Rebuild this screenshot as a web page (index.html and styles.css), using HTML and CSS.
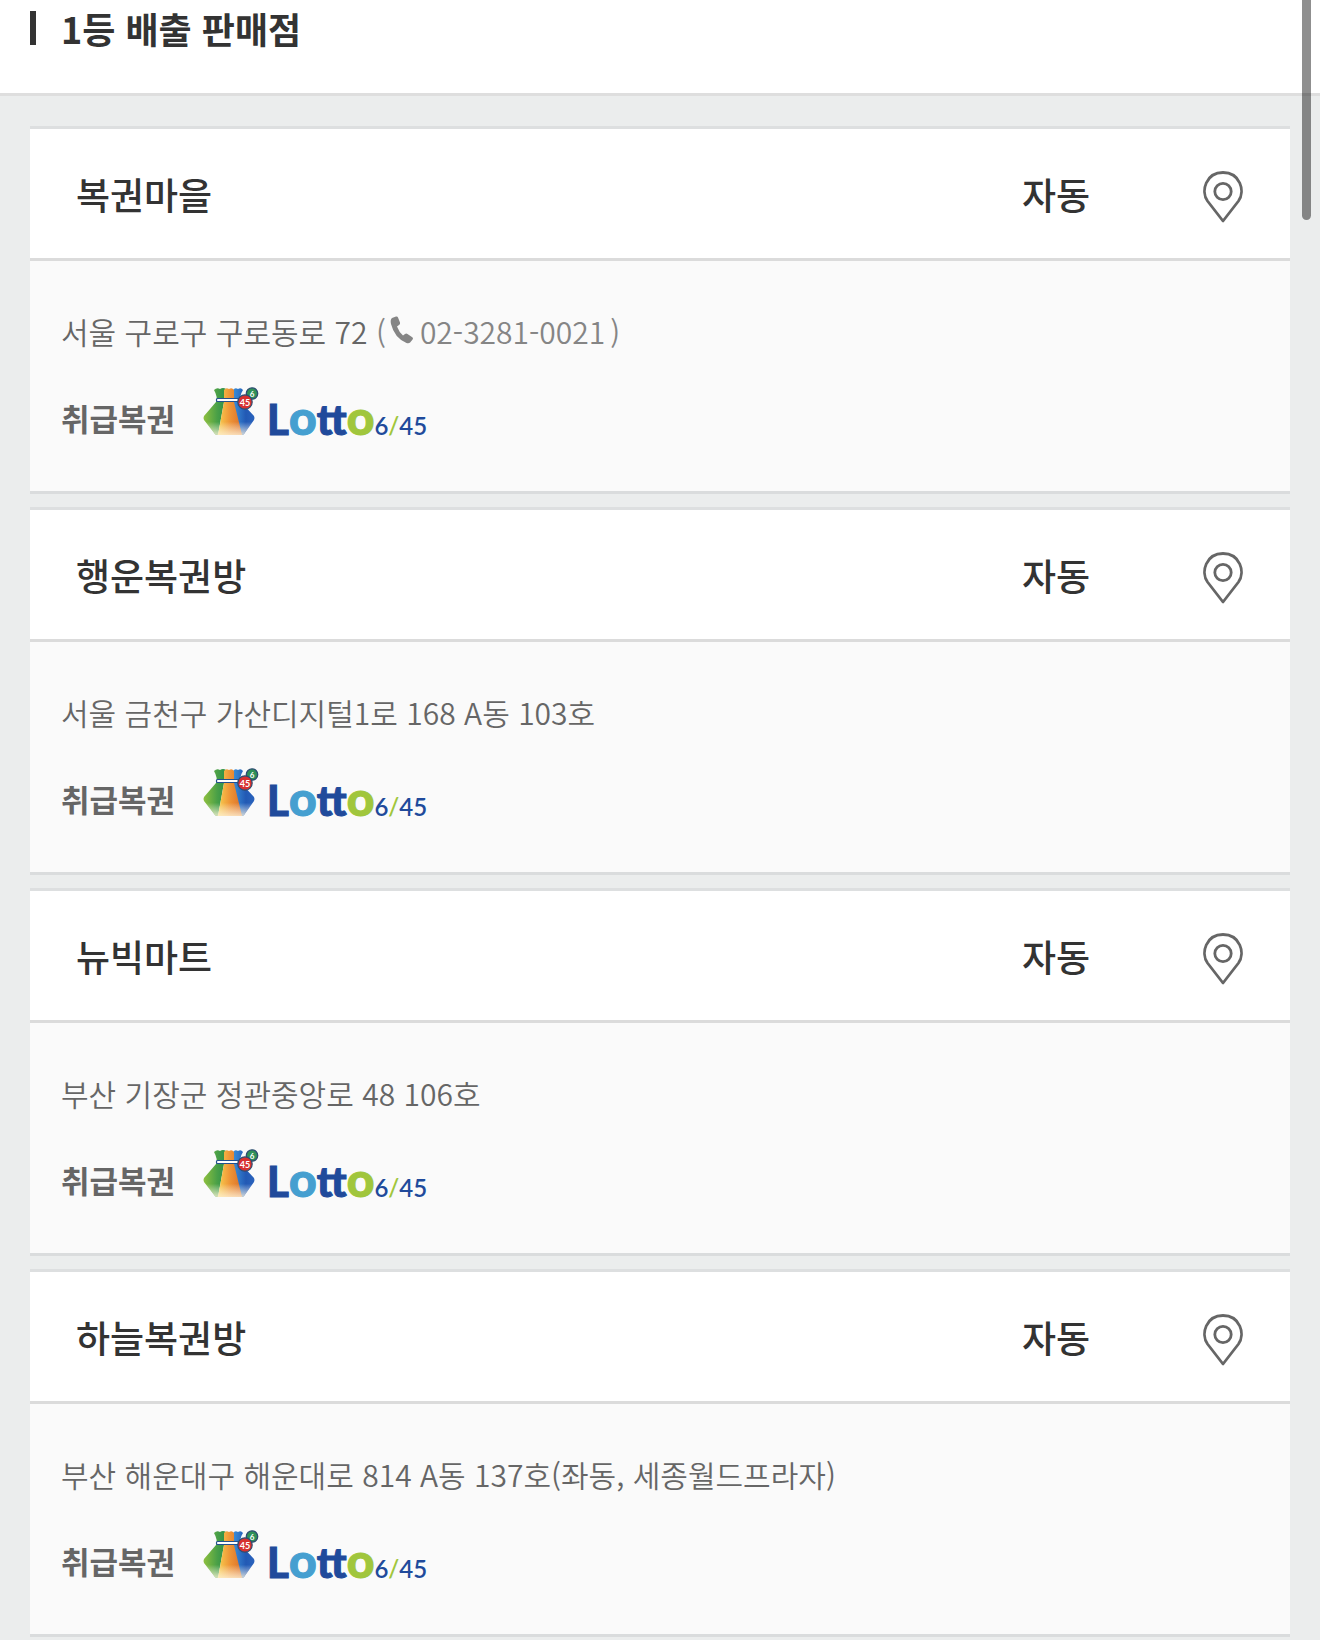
FILE: index.html
```html
<!DOCTYPE html>
<html lang="ko">
<head>
<meta charset="utf-8">
<meta name="viewport" content="width=device-width, initial-scale=1">
<title>1등 배출 판매점</title>
<link rel="stylesheet" href="styles.css">
</head>
<body>
<svg class="sprite" width="0" height="0" aria-hidden="true">
  <defs>
    <linearGradient id="green" x1="0" y1="0" x2="1" y2="0"><stop offset="0" stop-color="#8fc03f"/><stop offset=".6" stop-color="#4aa047"/><stop offset="1" stop-color="#2c8f49"/></linearGradient>
    <linearGradient id="orange" x1="0" y1="0" x2="1" y2="0"><stop offset="0" stop-color="#f8cf50"/><stop offset=".5" stop-color="#ee9436"/><stop offset="1" stop-color="#d9702a"/></linearGradient>
    <linearGradient id="blue" x1="0" y1="0" x2="1" y2="0"><stop offset="0" stop-color="#3b8fd8"/><stop offset=".6" stop-color="#2259b4"/><stop offset="1" stop-color="#2a63bd"/></linearGradient>
    <linearGradient id="shine" x1="0" y1="0" x2="0" y2="1"><stop offset=".6" stop-color="#fff" stop-opacity="0"/><stop offset="1" stop-color="#fff3d8" stop-opacity=".8"/></linearGradient>
    <symbol id="bag" viewBox="0 0 56 48">
      <path fill="url(#green)" d="M11 3q3-3 6-1 3-2 6 0l-2 13-6 33h-1q-1 0-2-1L1 33q-1-2 0-4l12-14q2-5-2-12z"/>
      <path fill="url(#blue)" d="M30 3q2-3 5-1 3-2 5 1-4 6-2 12l13 14q1 2 0 4L41 47q-1 1-2 1h-2l-7-33z"/>
      <path fill="url(#orange)" d="M21 3q2-3 5-1 3-2 5 1v12l8 33H15l6-33z"/>
      <path fill="url(#shine)" d="M1 33q-1-2 0-4l12-14h25l13 14q1 2 0 4L41 47q-1 1-2 1H14q-1 0-2-1z"/>
      <rect x="13.500" y="11.500" width="22" height="3" rx="1" fill="#fff" stroke="#23508e" stroke-width="1.200"/>
      <circle cx="49" cy="6.500" r="5.700" fill="#2f9158" stroke="#2c4d71" stroke-width="1.300"/>
      <circle cx="42" cy="15" r="7.200" fill="#d7302f" stroke="#2c4d71" stroke-width="1.200"/>
      <text class="ball-text" x="42" y="18.500" font-size="9">45</text>
      <text class="ball-text" x="49" y="9.500" font-size="8">6</text>
    </symbol>
    <symbol id="pin" viewBox="0 0 40 52">
      <path d="M20 50 4.500 30C-2.500 20 3 1.500 20 1.500S42.500 20 35.500 30z" fill="none" stroke="#666" stroke-width="2.800" stroke-linejoin="round"/>
      <circle cx="20" cy="20.500" r="8.200" fill="none" stroke="#666" stroke-width="2.800"/>
    </symbol>
    <symbol id="phone" viewBox="0 0 24 28">
      <path fill="#858585" d="M2 2 6 .500q1.500-.5 2 1l2 5q.5 1.500-1 2.500L7 10.500q2 5.500 6 9l2-1.500q1.300-1 2.500 0l4.800 3.200q1.300 1 .3 2.300l-2.500 3q-1.300 1.300-3.600.5Q4.500 22 1 8 0 3.500 2 2z"/>
    </symbol>
  </defs>
</svg>

<header class="page-head"><h1 class="page-title">1등 배출 판매점</h1></header>

<main class="stores">
  <article class="store">
    <div class="store-head">
      <h2 class="store-name">복권마을</h2>
      <span class="store-type">자동</span>
      <button class="map-button" type="button" aria-label="복권마을 위치"><svg class="pin"><use href="#pin"/></svg></button>
    </div>
    <div class="store-body">
      <p class="address">서울 구로구 구로동로 72 <span class="tel">(<a class="tel-link" href="tel:02-3281-0021"><svg class="phone" aria-hidden="true"><use href="#phone"/></svg>02-3281-0021</a>)</span></p>
      <div class="products">
        <strong class="label">취급복권</strong>
        <div class="logo"><svg class="bag"><use href="#bag"/></svg><span class="word">L<span class="round sky">o</span>tt<span class="round lime">o</span></span><span class="nums">6<span class="lime">/</span>45</span></div>
      </div>
    </div>
  </article>

  <article class="store">
    <div class="store-head">
      <h2 class="store-name">행운복권방</h2>
      <span class="store-type">자동</span>
      <button class="map-button" type="button" aria-label="행운복권방 위치"><svg class="pin"><use href="#pin"/></svg></button>
    </div>
    <div class="store-body">
      <p class="address">서울 금천구 가산디지털1로 168 A동 103호</p>
      <div class="products">
        <strong class="label">취급복권</strong>
        <div class="logo"><svg class="bag"><use href="#bag"/></svg><span class="word">L<span class="round sky">o</span>tt<span class="round lime">o</span></span><span class="nums">6<span class="lime">/</span>45</span></div>
      </div>
    </div>
  </article>

  <article class="store">
    <div class="store-head">
      <h2 class="store-name">뉴빅마트</h2>
      <span class="store-type">자동</span>
      <button class="map-button" type="button" aria-label="뉴빅마트 위치"><svg class="pin"><use href="#pin"/></svg></button>
    </div>
    <div class="store-body">
      <p class="address">부산 기장군 정관중앙로 48 106호</p>
      <div class="products">
        <strong class="label">취급복권</strong>
        <div class="logo"><svg class="bag"><use href="#bag"/></svg><span class="word">L<span class="round sky">o</span>tt<span class="round lime">o</span></span><span class="nums">6<span class="lime">/</span>45</span></div>
      </div>
    </div>
  </article>

  <article class="store">
    <div class="store-head">
      <h2 class="store-name">하늘복권방</h2>
      <span class="store-type">자동</span>
      <button class="map-button" type="button" aria-label="하늘복권방 위치"><svg class="pin"><use href="#pin"/></svg></button>
    </div>
    <div class="store-body">
      <p class="address">부산 해운대구 해운대로 814 A동 137호(좌동, 세종월드프라자)</p>
      <div class="products">
        <strong class="label">취급복권</strong>
        <div class="logo"><svg class="bag"><use href="#bag"/></svg><span class="word">L<span class="round sky">o</span>tt<span class="round lime">o</span></span><span class="nums">6<span class="lime">/</span>45</span></div>
      </div>
    </div>
  </article>
</main>
<div class="scroll-thumb" aria-hidden="true"></div>
</body>
</html>
```
FILE: styles.css
```css
* { box-sizing: border-box; }
body {
  margin: 0;
  min-height: 100vh;
  background: #ebeded;
  color: #333;
  font-family: "Noto Sans CJK KR", sans-serif;
}
h1, h2, p { margin: 0; }
.sprite { position: absolute; }

.page-head {
  padding: 6px 30px 43px;
  background: #fff;
  border-bottom: 3px solid #dedede;
}
.page-title {
  display: flex;
  align-items: center;
  gap: 25px;
  font-size: 36px;
  line-height: 44px;
  font-weight: 700;
}
.page-title::before {
  content: "";
  width: 6px;
  height: 34px;
  background: #333;
}

.stores {
  display: flex;
  flex-direction: column;
  gap: 13px;
  padding: 30px 30px 0;
}
.store {
  border-top: 3px solid #dddfe0;
  border-bottom: 3px solid #dadcdd;
}
.store-head {
  display: grid;
  grid-template-columns: 1fr 200px 134px;
  align-items: center;
  height: 132px;
  padding-left: 46px;
  background: #fff;
  border-bottom: 3px solid #dbdbdb;
}
.store-name, .store-type {
  font-size: 37px;
  line-height: 48px;
  font-weight: 500;
}
.store-type { text-align: center; }
.map-button {
  justify-self: center;
  display: flex;
  padding: 6px 0 0;
  border: 0;
  background: none;
  cursor: pointer;
}
.pin { width: 40px; height: 52px; }

.store-body {
  height: 230px;
  padding: 48px 31px 0;
  background: #fafafa;
  color: #666;
}
.address {
  font-size: 30px;
  line-height: 44px;
  font-weight: 350;
}
.tel, .tel-link { color: #858585; }
.tel-link { margin: 0 5px 0 4px; text-decoration: none; }
.phone { width: 24px; height: 28px; margin-right: 6px; }
.products {
  display: flex;
  align-items: center;
  gap: 28px;
  margin-top: 33px;
}
.label { font-size: 31px; line-height: 64px; font-weight: 700; }
.logo {
  display: flex;
  align-items: baseline;
  color: #204a9b;
  font-family: Lato, sans-serif;
  line-height: 48px;
}
.bag { width: 56px; height: 48px; margin-right: 8px; }
.word {
  font-size: 42px;
  font-weight: 900;
  -webkit-text-stroke: 1px currentColor;
}
.round { font-size: 48px; line-height: 40px; }
.nums { font-size: 24px; font-weight: 600; }
.sky { color: #459fd0; }
.lime { color: #a0c63c; }
.ball-text { fill: #fff; font-family: Lato, sans-serif; font-weight: 700; text-anchor: middle; }

/* overlay scroll indicator */
.scroll-thumb {
  position: fixed;
  top: 0;
  right: 9px;
  width: 9px;
  height: 220px;
  border-radius: 0 0 5px 5px;
  background: rgba(0, 0, 0, .44);
}
```
